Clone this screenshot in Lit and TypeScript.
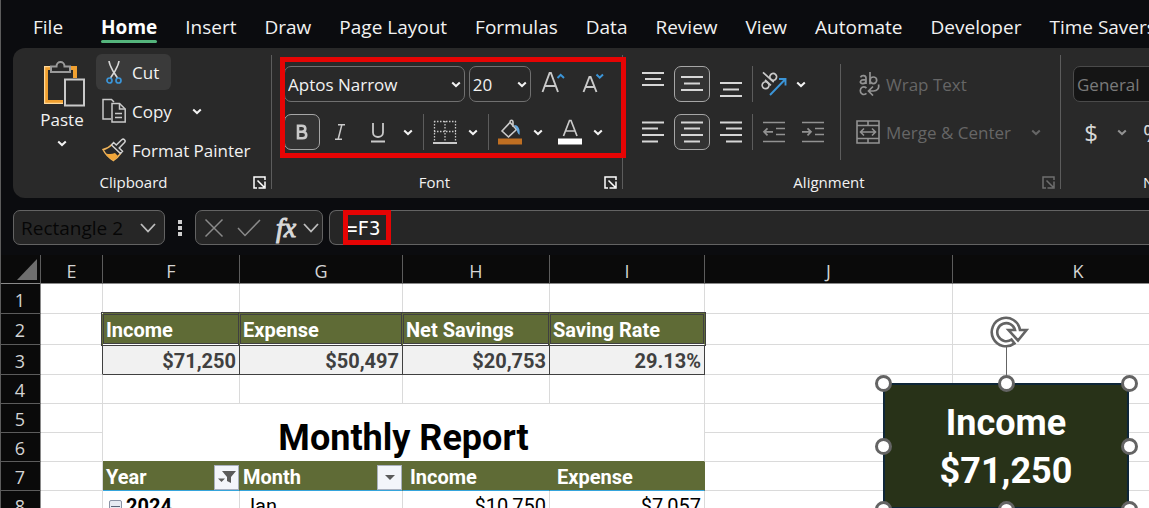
import { LitElement, html, css, svg, nothing, TemplateResult } from "lit";
import { customElement, property } from "lit/decorators.js";

const chevron = html`<svg class="chev" width="10" height="7" viewBox="0 0 10 7" aria-hidden="true">
  <path d="M1.2 1.4 5 5 8.8 1.4" fill="none" stroke="currentColor" stroke-width="2" />
</svg>`;

const lines = (rows: number[][], height = 24) => html`<svg width="24" height=${height} viewBox="0 0 24 24" aria-hidden="true">
  ${rows.map(([x1, x2, y]) => svg`<path d="M${x1} ${y}H${x2}" stroke="currentColor" stroke-width="1.8" />`)}
</svg>`;

const icons = {
  paste: html`<svg width="48" height="48" viewBox="-4 0 48 48" fill="none" aria-hidden="true">
    <path d="M11 8H4v34h17" stroke="#f0a030" stroke-width="4" />
    <path d="M11 6.600H2.600v36.800H21" stroke="#ffd898" stroke-width="1.200" />
    <path d="M26 8h7v10" stroke="#f0a030" stroke-width="4" />
    <path d="M9 12V6.500h5.500C14.500 .6 22.500 .6 22.500 6.500H28V12Z" stroke="#9a9a9a" stroke-width="2" fill="#292929" />
    <path d="M23 19.500h19v26H23Z" stroke="#c9c9c9" stroke-width="2" fill="#292929" />
  </svg>`,
  cut: html`<svg width="24" height="26" viewBox="0 0 24 26" fill="none" aria-hidden="true">
    <path d="M7 2c.5 4 2 6.500 4 10l4.500 7M17 2c-.5 4-2 6.500-4 10l-4.500 7" stroke="#d6d6d6" stroke-width="1.6" />
    <circle cx="7.500" cy="21.500" r="2.500" stroke="#3b95d8" stroke-width="1.700" />
    <circle cx="16.500" cy="21.500" r="2.500" stroke="#3b95d8" stroke-width="1.700" />
  </svg>`,
  copy: html`<svg width="24" height="26" viewBox="0 0 24 26" fill="none" stroke="#c9c9c9" stroke-width="1.5" aria-hidden="true">
    <path d="M9 21H1V1.500h8.500L12 4" />
    <path d="M10 24V5.500h7.500L23.200 11v13Z" />
    <path d="M17.500 5.500V11h5.700M13 15.500h7M13 19.500h7" />
  </svg>`,
  painter: html`<svg width="24" height="24" viewBox="0 0 24 24" fill="none" aria-hidden="true">
    <path d="M10 6.500C7 9.500 4.500 11 1 11.500c2.500 5 6 8.500 10.500 11 3-2 5-4 7-7Z" fill="#292929" stroke="#f0b45a" stroke-width="1.500" />
    <path d="M4 15.500c3 .8 6 .8 9-.5l3 3-4.500 4.500C8 20.500 6 18.500 4 15.500Z" fill="#f3a73a" />
    <path d="m9.500 7 9 8.500 2-2.200-3.300-3.300 5.300-5.500c1.800-2-.9-4.500-2.800-2.700L14.300 7l-2.700-2.500Z" fill="#292929" stroke="#d0d0d0" stroke-width="1.500" />
  </svg>`,
  launcher: html`<svg width="13" height="13" viewBox="0 0 13 13" fill="none" stroke="currentColor" stroke-width="1.5" aria-hidden="true">
    <path d="M4 12H1V1h11v3" /><path d="m4.500 4.500 6.500 6.500M12 5.500V12H5.500" />
  </svg>`,
  grow: html`<svg width="24" height="24" viewBox="0 0 24 24" fill="none" aria-hidden="true">
    <path d="M1.500 20 8.600 1h1.300L17 20M4 14h10.500" stroke="#c9c9c9" stroke-width="1.900" />
    <path d="m16.500 6 3.200-3.200L23 6" stroke="#3b95d8" stroke-width="2" />
  </svg>`,
  shrink: html`<svg width="24" height="24" viewBox="0 0 24 24" fill="none" aria-hidden="true">
    <path d="M2.500 20 8.400 5h1.200l5.900 15M4.600 15h8.800" stroke="#c9c9c9" stroke-width="1.900" />
    <path d="M15.500 2.500 18.700 5.700 22 2.500" stroke="#3b95d8" stroke-width="2" />
  </svg>`,
  borders: html`<svg width="24" height="24" viewBox="0 0 24 24" fill="none" stroke="#c9c9c9" aria-hidden="true">
    <path d="M1 1.500h22M1 11.500h22M1.500 1v20M12 1v20M22.500 1v20" stroke-width="1.300" stroke-dasharray="1.500 1.500" />
    <path d="M0 23h24" stroke-width="1.800" />
  </svg>`,
  fill: html`<svg width="24" height="26" viewBox="0 0 24 26" fill="none" aria-hidden="true">
    <path d="m4 12 8-8.500 6.500 7-8 7.500Z M12 3.500c0-3 3-3 3 0V8" stroke="#c9c9c9" stroke-width="1.600" />
    <path d="M16 6c4-.500 6.500 4 5.500 10-1.500-1-2.500-3-3-6Z" fill="#62a8e0" />
    <path d="M0 19.500h24v6H0Z" fill="#bf6f22" />
  </svg>`,
  color: html`<svg width="24" height="26" viewBox="0 0 24 26" fill="none" aria-hidden="true">
    <path d="m5.500 17 6-15.500h1.500L19 17M7.700 12h9" stroke="#c9c9c9" stroke-width="1.700" />
    <path d="M0 19.500h24v6H0Z" fill="#fff" />
  </svg>`,
  underline: html`<svg width="16" height="22" viewBox="0 0 16 22" fill="none" stroke="#c9c9c9" stroke-width="1.800" aria-hidden="true">
    <path d="M3 2v9.500c0 6 10 6 10 0V2M1 20.500h14" />
  </svg>`,
  italic: html`<svg width="12" height="18" viewBox="0 0 12 18" fill="none" stroke="#c9c9c9" stroke-width="1.500" aria-hidden="true">
    <path d="M4 1.800h7M1 16.200h7M7.800 2 4.200 16" />
  </svg>`,
  bold: html`<svg width="14" height="18" viewBox="0 0 14 18" fill="none" stroke="#c9c9c9" stroke-width="2.600" aria-hidden="true">
    <path d="M3 2.800h3.800c4.700 0 4.700 5.900 0 5.900H3h4.500c5 0 5 6.500 0 6.500H3ZM3 2v14" />
  </svg>`,
  orient: html`<svg width="26" height="26" viewBox="0 0 26 26" fill="none" aria-hidden="true">
    <g stroke="#c9c9c9" stroke-width="1.700" transform="rotate(-48 8 12)">
      <circle cx="4" cy="11" r="3.400" /><path d="M7.600 7v8M11.800 .5V15" /><circle cx="15.400" cy="11" r="3.400" />
    </g>
    <path d="M9 24 24 8.500M18 8h6.500v6.500" stroke="#3b95d8" stroke-width="1.900" />
  </svg>`,
  outdent: html`<svg width="24" height="24" viewBox="0 0 24 24" fill="none" stroke="#929292" stroke-width="1.700" aria-hidden="true">
    <path d="M1 2.500h22M14 8.500h9M14 14.500h9M1 21.500h22M11 11.800H2m3.500-3.500L2 11.800l3.500 3.500" />
  </svg>`,
  indent: html`<svg width="24" height="24" viewBox="0 0 24 24" fill="none" stroke="#929292" stroke-width="1.700" aria-hidden="true">
    <path d="M1 2.500h22M14 8.500h9M14 14.500h9M1 21.500h22M1 11.800h9M6.500 8.300l3.500 3.500-3.500 3.500" />
  </svg>`,
  wrap: html`<svg width="24" height="24" viewBox="0 0 24 24" fill="none" stroke="#929292" stroke-width="1.700" aria-hidden="true">
    <path d="M4.500 5.300c1-2.300 5.500-2.300 5.500 1V12M10 7.600c-7-.2-6.700 4-3.300 4 1.800 0 3.300-1.200 3.300-2.900M14 0v12.300" />
    <circle cx="17.400" cy="8.300" r="3.300" />
    <path d="M10.500 16c-3.300-2.500-6.200-.3-6.200 2.700s2.900 5.200 6.200 2.700M22.500 12.500c1 4-1.500 6.500-5 6.500h-5M17 14.500 12.500 19l4.500 4.500" />
  </svg>`,
  merge: html`<svg width="24" height="24" viewBox="0 0 24 24" fill="none" stroke="#929292" stroke-width="1.600" aria-hidden="true">
    <path d="M1 1h22v22H1ZM1 5.500h22M1 18.500h22M12 1v4.500M12 18.500V23M4.500 12h15M8 8.500 4.500 12 8 15.500M16 8.500l3.500 3.500-3.500 3.500" />
  </svg>`,
  rotate: html`<svg class="rotate" width="40" height="34" viewBox="-17 -17 40 34" fill="none" stroke="#646464" stroke-width="2.600" aria-hidden="true">
    <path fill="#fff" d="M14-2A14.200 14.200 0 1 0 8.500 11.400L5.500 7.500A9 9 0 1 1 9-2H2.500L12 8.500 20.500-2Z" />
  </svg>`,
  filter: html`<svg width="18" height="14" viewBox="0 0 18 14" aria-hidden="true">
    <path d="M4 1h14l-5 6v6l-4-2V7Z" fill="#5a5a5a" /><path d="M0 8.500h7L3.500 12Z" fill="#5a5a5a" />
  </svg>`,
  drop: html`<svg width="10" height="5" viewBox="0 0 10 5" aria-hidden="true"><path d="M0 0h10L5 5Z" fill="#5a5a5a" /></svg>`,
};

const shared = css`
  * { box-sizing: border-box; }
  button, select, input { font: inherit; color: inherit; margin: 0; padding: 0; border: 0; background: none; }
  svg { display: block; flex: none; }
`;

@customElement("ribbon-group")
class RibbonGroup extends LitElement {
  @property() label = "";
  @property({ type: Boolean }) dim = false;

  static styles = [shared, css`
    :host { display: flex; flex-direction: column; flex: none; position: relative; padding-top: 6px; }
    :host::after { content: ""; position: absolute; right: 0; top: 7px; bottom: 9px; width: 1px; background: #5c5c5c; }
    .body { flex: 1; }
    .foot { display: flex; align-items: center; height: 20px; margin-bottom: 6px; padding-right: 6px; font-size: 15px; }
    .label { flex: 1; text-align: center; }
    .launch { display: flex; justify-content: flex-end; width: 20px; color: #fff; }
    .dim { color: #6f6f6f; }
  `];

  render() {
    return html`<div class="body"><slot></slot></div>
      <div class="foot">
        <span class="label">${this.label}</span>
        <button class="launch ${this.dim ? "dim" : ""}" aria-label="${this.label} settings">${icons.launcher}</button>
      </div>`;
  }
}

@customElement("excel-ribbon")
class ExcelRibbon extends LitElement {
  static styles = [shared, css`
    :host { display: block; color: #f2f2f2; }
    .tabs { display: flex; gap: 28px; height: 48px; padding-left: 32px; font-size: 19px; white-space: nowrap; }
    .tab { display: flex; flex-direction: column; flex: none; padding-top: 14px; line-height: 26px; color: inherit; text-decoration: none; }
    .tab:first-child { margin-right: 10px; }
    .tab.on { font-weight: 700; color: #fff; }
    .tab.on::after { content: ""; height: 3px; border-radius: 2px; background: #54b47c; }
    .ribbon { display: flex; height: 150px; margin-left: 12px; padding-left: 8px; border-radius: 12px 0 0 12px; background: #292929; font-size: 17px; white-space: nowrap; overflow: hidden; }
    .clip { display: flex; }
    .paste { display: flex; flex-direction: column; align-items: center; width: 75px; padding: 6px 0 0 7px; line-height: 24px; }
    .paste .chev { margin-top: 8px; }
    .stack { display: flex; flex-direction: column; align-items: flex-start; gap: 3px; width: 176px; }
    .cmd { display: flex; align-items: center; gap: 6px; height: 36px; padding: 0 12px 0 6px; border-radius: 6px; }
    .cmd.hot { background: #3a3a3a; }
    .cmd .chev { margin-left: 14px; }
    .rows { display: flex; flex-direction: column; gap: 12px; padding: 12px 12px 0; }
    .row { display: flex; align-items: center; gap: 3px; height: 36px; }
    .row.tight { gap: 2px; }
    .row.wide { gap: 4px; }
    .tool { display: flex; align-items: center; justify-content: center; width: 36px; height: 36px; border-radius: 7px; color: #d6d6d6; }
    .tool.on { border: 1px solid #a6a6a6; background: #333; }
    .tool.slim { width: 32px; }
    .tool.top { align-items: flex-start; padding-top: 2px; }
    .tool.low { align-items: flex-end; }
    .arrow { display: flex; align-items: center; justify-content: center; width: 20px; height: 36px; }
    .arrow.near { width: 12px; }
    .sep { width: 1px; height: 36px; margin: 0 3px; background: #5c5c5c; }
    .sep.flush { margin: 0; }
    .pick { display: grid; align-items: center; height: 36px; border: 1px solid #707070; border-radius: 7px; }
    .pick > * { grid-area: 1 / 1; }
    .pick select { appearance: none; width: 100%; height: 34px; padding-left: 3px; outline: none; }
    .pick .chev { justify-self: end; margin-right: 3px; pointer-events: none; }
    .pick.name { width: 182px; }
    .pick.size { width: 63px; }
    .pick.format { width: 224px; border-color: #4a4a4a; background: #151515; color: #7a7a7a; }
    .gap { margin-left: 4px; }
    .font { position: relative; width: 351px; }
    .mark { position: absolute; left: 8px; right: -3px; top: 9px; height: 101px; border: 5px solid #e60404; pointer-events: none; z-index: 1; }
    .align { display: flex; width: 438px; }
    .align .rows:first-child { padding-right: 9px; }
    .cmds { display: flex; flex-direction: column; gap: 12px; height: 96px; margin-top: 10px; padding: 2px 0 0 15px; border-left: 1px solid #5c5c5c; }
    .cmds .cmd { padding: 0; color: #666; }
    .number { color: #929292; }
    .money { font-size: 24px; }
  `];

  tabs = ["File", "Home", "Insert", "Draw", "Page Layout", "Formulas", "Data", "Review", "View", "Automate", "Developer", "Time Savers"];

  tool(label: string, icon: TemplateResult, extra = "") {
    return html`<button class="tool ${extra}" aria-label=${label}>${icon}</button>`;
  }

  arrow(label: string, extra = "") {
    return html`<button class="arrow ${extra}" aria-label=${label}>${chevron}</button>`;
  }

  render() {
    return html`
      <nav class="tabs">${this.tabs.map((t) => html`<a href="#" class="tab ${t === "Home" ? "on" : ""}">${t}</a>`)}</nav>
      <div class="ribbon">
        <ribbon-group label="Clipboard">
          <div class="clip">
            <button class="paste">${icons.paste}<span>Paste</span>${chevron}</button>
            <div class="stack">
              <button class="cmd hot">${icons.cut}<span>Cut</span></button>
              <button class="cmd">${icons.copy}<span>Copy</span>${chevron}</button>
              <button class="cmd">${icons.painter}<span>Format Painter</span></button>
            </div>
          </div>
        </ribbon-group>
        <ribbon-group class="font" label="Font">
          <div class="rows">
            <div class="row wide">
              <div class="pick name"><select aria-label="Font name"><option>Aptos Narrow</option></select>${chevron}</div>
              <div class="pick size"><select aria-label="Font size"><option>20</option></select>${chevron}</div>
              ${this.tool("Increase font size", icons.grow)}
              ${this.tool("Decrease font size", icons.shrink)}
            </div>
            <div class="row tight">
              ${this.tool("Bold", icons.bold, "on")}${this.tool("Italic", icons.italic)}${this.tool("Underline", icons.underline)}
              ${this.arrow("Underline styles")}
              <span class="sep"></span>
              ${this.tool("Borders", icons.borders, "slim")}${this.arrow("Border styles")}
              <span class="sep"></span>
              ${this.tool("Fill color", icons.fill, "slim")}${this.arrow("Fill colors")}
              ${this.tool("Font color", icons.color, "slim gap")}${this.arrow("Font colors")}
            </div>
          </div>
          <div class="mark"></div>
        </ribbon-group>
        <ribbon-group label="Alignment" dim>
          <div class="align">
            <div class="rows">
              <div class="row">
                ${this.tool("Top align", lines([[1, 23, 5], [4, 20, 11], [1, 23, 17]]), "top")}
                ${this.tool("Middle align", lines([[1, 23, 5], [4, 20, 11.5], [1, 23, 18]]), "on")}
                ${this.tool("Bottom align", lines([[1, 23, 5], [4, 20, 11.5], [1, 23, 18]]), "low")}
                <span class="sep flush"></span>
                ${this.tool("Orientation", icons.orient)}${this.arrow("Orientations", "near")}
              </div>
              <div class="row">
                ${this.tool("Align left", lines([[1, 23, 2.5], [1, 17, 8.5], [1, 23, 15], [1, 17, 21.5]]))}
                ${this.tool("Center", lines([[1, 23, 2.5], [4, 20, 8.5], [1, 23, 15], [4, 20, 21.5]]), "on")}
                ${this.tool("Align right", lines([[1, 23, 2.5], [7, 23, 8.5], [1, 23, 15], [7, 23, 21.5]]))}
                <span class="sep flush"></span>
                ${this.tool("Decrease indent", icons.outdent)}${this.tool("Increase indent", icons.indent)}
              </div>
            </div>
            <div class="cmds">
              <button class="cmd">${icons.wrap}<span>Wrap Text</span></button>
              <button class="cmd">${icons.merge}<span>Merge &amp; Center</span>${chevron}</button>
            </div>
          </div>
        </ribbon-group>
        <ribbon-group label="Number">
          <div class="rows number">
            <div class="row">
              <div class="pick format"><select aria-label="Number format"><option>General</option></select>${chevron}</div>
            </div>
            <div class="row">
              <button class="tool money">$</button>${this.arrow("Currencies")}<button class="tool money">%</button>
            </div>
          </div>
        </ribbon-group>
      </div>`;
  }
}

@customElement("formula-bar")
class FormulaBar extends LitElement {
  static styles = [shared, css`
    :host { display: flex; height: 35px; margin: 12px 0 10px 12px; }
    .box { display: flex; align-items: center; height: 35px; border: 1px solid #636363; border-radius: 7px; background: #262626; }
    .name { width: 152px; padding: 0 8px 0 7px; justify-content: space-between; font-size: 19px; }
    .name input { width: 110px; color: #060606; outline: none; }
    .dots { align-self: center; }
    .acts { width: 128px; padding: 0 3px 0 8px; justify-content: space-between; margin-right: 6px; }
    .edit { display: flex; align-items: center; gap: 13px; }
    .fx { width: 24px; color: #d8d8d8; font: italic 28px/28px "Liberation Serif", serif; -webkit-text-stroke: 1px #d8d8d8; }
    .formula { flex: 1; position: relative; border-right: 0; border-radius: 7px 0 0 7px; }
    .formula input { width: 100%; padding-left: 16px; color: #fff; outline: none; font: 19px "DejaVu Sans Mono", monospace; }
    .mark { position: absolute; left: 13px; top: -1px; width: 48px; height: 35px; border: 5px solid #e60404; pointer-events: none; }
  `];

  render() {
    const wide = html`<svg width="16" height="10" viewBox="0 0 16 10" fill="none" stroke="#bdbdbd" stroke-width="1.8" aria-hidden="true"><path d="m1 1 7 7.500L15 1" /></svg>`;
    return html`
      <div class="box name"><input aria-label="Name box" value="Rectangle 2" />${wide}</div>
      <svg class="dots" width="30" height="18" viewBox="0 0 30 18" fill="#cfcfcf" aria-hidden="true"><path d="M13 1h4v4h-4ZM13 7h4v4h-4ZM13 13h4v4h-4Z" /></svg>
      <div class="box acts">
        <div class="edit">
          <button aria-label="Cancel"><svg width="20" height="20" viewBox="0 0 20 20" stroke="#8a8a8a" stroke-width="1.500"><path d="m1.500 1.500 17 17M18.500 1.500l-17 17" /></svg></button>
          <button aria-label="Enter"><svg width="24" height="18" viewBox="0 0 24 18" fill="none" stroke="#8a8a8a" stroke-width="1.500"><path d="m1 9 7 7.500L23 1" /></svg></button>
          <button class="fx" aria-label="Insert function">fx</button>
        </div>
        <button aria-label="Function list">${wide}</button>
      </div>
      <div class="box formula"><input aria-label="Formula" value="=F3" /><span class="mark"></span></div>`;
  }
}

interface Cell { text?: string; cls?: string; span?: boolean; filter?: TemplateResult; toggle?: boolean; }

@customElement("sheet-grid")
class SheetGrid extends LitElement {
  static styles = [shared, css`
    :host { display: block; position: relative; flex: 1; margin-left: -1px; overflow: hidden; background: #fff; color: #000; font: 20px Roboto, sans-serif; }
    table { table-layout: fixed; width: 1204px; border-collapse: separate; border-spacing: 0; }
    .w0 { width: 41px; } .w1 { width: 62px; } .w2 { width: 137px; } .w3 { width: 163px; }
    .w4 { width: 147px; } .w5 { width: 155px; } .w6 { width: 248px; } .w7 { width: 251px; }
    tr { height: 29px; }
    .tall { height: 30px; }
    .taller { height: 31px; }
    th, td { padding: 2px 0 0; line-height: 24px; border: 0 solid #dadada; border-width: 0 1px 1px 0; white-space: nowrap; }
    th { background: #0a0a0a; color: #d4d4d4; border-color: #5c5c5c; font: 18px/24px "Open Sans", sans-serif; }
    thead th { border-bottom-color: #8a8a8a; padding-top: 4px; }
    tbody th { border-right-color: #8a8a8a; }
    tbody th, .corner { box-shadow: inset 1px 0 #5c5c5c; }
    .corner { padding: 0; }
    .corner svg { margin: 0 3px 0 auto; }
    .head { position: relative; padding-left: 3px; text-align: left; font-weight: 700; color: #fff; background: #5f6b36; border-color: #5f6b36; border-bottom-color: #fff; box-shadow: -1px 0 #5f6b36, 0 -1px #5f6b36; }
    .head::after { content: ""; position: absolute; inset: -2px; border: 3px double #404040; }
    .sum { padding-right: 3px; text-align: right; font-weight: 700; color: #404040; background: #f1f1f1; border-color: #404040; }
    .edge { border-right-color: #404040; }
    .title { text-align: center; font-size: 36px; font-weight: 700; line-height: 46px; padding: 11px 0 0; border-bottom-color: #5f6b36; }
    .pivot { padding: 0; font-weight: 700; color: #fff; background: #5f6b36; border-right-color: #5f6b36; border-bottom-color: #35a5dc; }
    .year { padding: 0; }
    .in { display: flex; align-items: center; justify-content: space-between; height: 28px; padding: 2px 0 0 3px; }
    .pad .in { padding-left: 7px; }
    .filter { display: flex; align-items: center; justify-content: center; width: 25px; height: 25px; background: #f3f5fa; border: 1px solid #a9b0bd; }
    .year .in { justify-content: flex-start; gap: 4px; padding-left: 6px; font-weight: 700; }
    .toggle { width: 13px; height: 13px; border: 1px solid #8a93a5; border-radius: 2px; background: linear-gradient(#5a6478, #5a6478) center / 9px 1px no-repeat #e6eaf2; }
    .left { padding-left: 4px; }
    .right { padding-right: 3px; text-align: right; }
    .shape { position: absolute; left: 883px; top: 128px; width: 246px; height: 126px; padding-top: 16px; box-shadow: inset 0 0 0 2px #0e2638; background: #283218; color: #fff; text-align: center; font-size: 36px; font-weight: 700; line-height: 48px; }
    .knob { position: absolute; width: 17px; height: 17px; margin: -8px; border: 3px solid #646464; border-radius: 50%; background: #fff; }
    .t { top: 0; } .m { top: 50%; } .b { top: 100%; }
    .l { left: 0; } .c { left: 50%; } .r { left: 100%; }
    .stem { position: absolute; left: 50%; bottom: 100%; width: 1px; height: 40px; background: #646464; }
    .rotate { position: absolute; left: 106px; top: -68px; }
  `];

  rows: Cell[][] = [
    [{}, {}, {}, {}, {}, {}, {}],
    [{}, { text: "Income", cls: "head" }, { text: "Expense", cls: "head" }, { text: "Net Savings", cls: "head" }, { text: "Saving Rate", cls: "head" }, {}, {}],
    [{ cls: "edge" }, { text: "$71,250", cls: "sum" }, { text: "$50,497", cls: "sum" }, { text: "$20,753", cls: "sum" }, { text: "29.13%", cls: "sum" }, {}, {}],
    [{}, {}, {}, {}, {}, {}, {}],
    [{}, { text: "Monthly Report", cls: "title", span: true }, {}, {}],
    [{}, {}, {}],
    [{}, { text: "Year", cls: "pivot", filter: icons.filter }, { text: "Month", cls: "pivot", filter: icons.drop }, { text: "Income", cls: "pivot pad" }, { text: "Expense", cls: "pivot pad" }, {}, {}],
    [{}, { text: "2024", cls: "year", toggle: true }, { text: "Jan", cls: "left" }, { text: "$10,750", cls: "right" }, { text: "$7,057", cls: "right" }, {}, {}],
  ];

  cell(c: Cell) {
    const boxed = c.filter || c.toggle || c.cls?.startsWith("pivot");
    return html`<td class=${c.cls ?? ""} colspan=${c.span ? 4 : 1} rowspan=${c.span ? 2 : 1}>${boxed
      ? html`<div class="in">${c.toggle ? html`<button class="toggle" aria-label="Collapse 2024"></button>` : nothing}<span>${c.text}</span>${c.filter ? html`<button class="filter" aria-label="Filter ${c.text}">${c.filter}</button>` : nothing}</div>`
      : c.text ?? nothing}</td>`;
  }

  render() {
    return html`
      <table>
        <colgroup>${[0, 1, 2, 3, 4, 5, 6, 7].map((i) => html`<col class="w${i}" />`)}</colgroup>
        <thead><tr>
          <th class="corner"><svg width="20" height="21" viewBox="0 0 20 21" aria-hidden="true"><path d="M20 0v21H0Z" fill="#6e6e6e" /></svg></th>
          ${["E", "F", "G", "H", "I", "J", "K"].map((c) => html`<th scope="col">${c}</th>`)}
        </tr></thead>
        <tbody>${this.rows.map((r, i) => html`<tr class=${i === 1 ? "taller" : i === 0 || i === 2 ? "tall" : ""}><th scope="row">${i + 1}</th>${r.map((c) => this.cell(c))}</tr>`)}</tbody>
      </table>
      <div class="shape">
        <div>Income</div><div>$71,250</div>
        <span class="stem"></span>${icons.rotate}
        ${["t l", "t c", "t r", "m l", "m r", "b l", "b c", "b r"].map((k) => html`<span class="knob ${k}"></span>`)}
      </div>`;
  }
}

@customElement("app-root")
class AppRoot extends LitElement {
  static styles = css`
    :host { display: flex; flex-direction: column; height: 100vh; overflow: hidden; box-sizing: border-box; background: #0b0c0f; font-family: "Open Sans", "Noto Sans", sans-serif; border-left: 1px solid #5c5c5c; }
  `;

  render() {
    return html`<excel-ribbon></excel-ribbon><formula-bar></formula-bar><sheet-grid></sheet-grid>`;
  }
}
